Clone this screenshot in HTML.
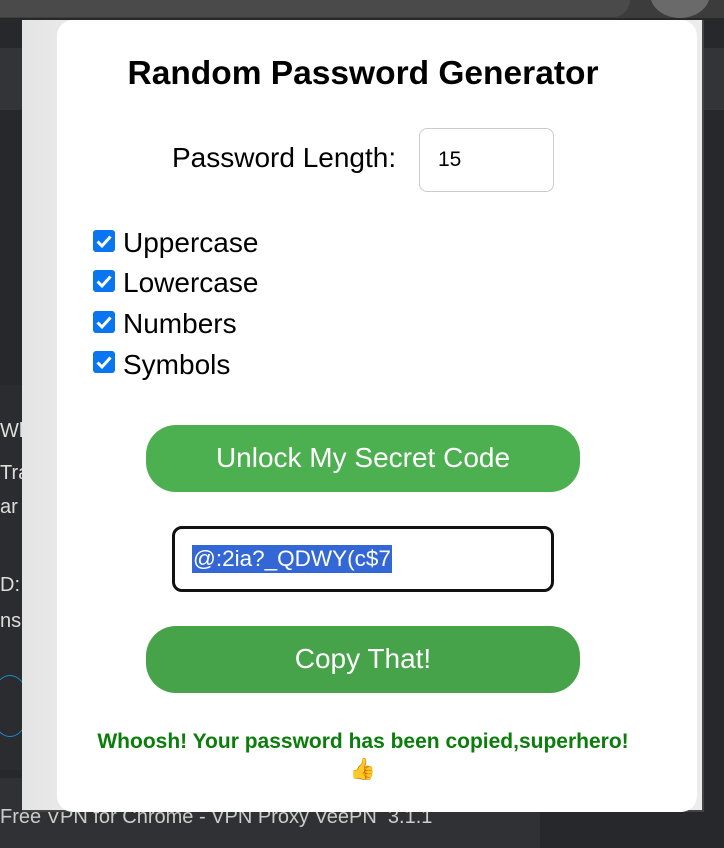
<!DOCTYPE html>
<html><head><style>
*{box-sizing:border-box;margin:0;padding:0}
body{width:724px;height:848px;background:#27282c;position:relative;overflow:hidden;font-family:"Liberation Sans",Arial,sans-serif}
.top{position:absolute;left:0;top:0;width:724px;height:18px;background:#3c3c3c}
.tab{position:absolute;left:0;top:0;width:630px;height:17px;background:#4a4a4a;border-radius:0 0 20px 0}
.circ{position:absolute;left:650px;top:-30px;width:60px;height:48px;border-radius:50%;background:#6a6a6a}
.band1{position:absolute;left:0;top:48px;width:724px;height:62px;background:#333438}
.side{position:absolute;left:0;top:385px;width:60px;height:385px;background:#2b2c30}
.bt{position:absolute;color:#ddd;font-size:20px}
.foot{position:absolute;left:0;top:778px;width:540px;height:70px;background:#303135}
.popup{position:absolute;left:22px;top:20px;width:682px;height:792px;background:linear-gradient(90deg,#e4e4e4,#eeeeee 12%,#ececec);border-right:2px solid #444;border-bottom:2px solid #444}
.card{position:absolute;left:57px;top:20px;width:640px;height:792px;background:#fff;border-radius:16px}
h1{position:absolute;left:0;top:55px;width:726px;text-align:center;font-size:33.5px;font-weight:bold;color:#000}
.lbl{position:absolute;left:172px;top:142px;font-size:28px;color:#000}
.num{position:absolute;left:419px;top:128px;width:135px;height:64px;border:1px solid #ccc;border-radius:8px;font-size:21px;padding:19px 0 0 18px}
.cb{position:absolute;left:93px;width:22px;height:22px;background:#0a75f0;border-radius:3px}
.cb svg{position:absolute;left:0;top:0}
.cl{position:absolute;left:123px;font-size:28px;color:#000}
.btn{position:absolute;left:146px;width:434px;height:67px;border-radius:30px;background:#4caf50;color:#fff;font-size:28px;text-align:center;line-height:66px}
.pw{position:absolute;left:172px;top:526px;width:382px;height:66px;border:3px solid #111;border-radius:10px}
.sel{position:absolute;left:17px;top:16px;background:#3367d6;color:#fff;font-size:22.5px;line-height:28px;padding:0 1px}
.msg{position:absolute;left:57px;top:728px;width:612px;text-align:center;font-size:21px;font-weight:bold;color:#0a7d0a;line-height:28px}
</style></head><body>
<div class="top"></div><div class="tab"></div><div class="circ"></div>
<div class="band1"></div><div class="side"></div>
<div class="bt" style="left:0;top:420px">Wh</div>
<div class="bt" style="left:0;top:462px">Tra</div>
<div class="bt" style="left:0;top:496px">ar</div>
<div class="bt" style="left:0;top:574px">D:</div>
<div class="bt" style="left:0;top:610px">ns</div>
<div style="position:absolute;left:-10px;top:675px;width:40px;height:62px;border:1px solid #1a8acb;border-radius:50%"></div>
<div class="foot"></div>
<div class="bt" style="left:0;top:806px;color:#ccc">Free VPN for Chrome - VPN Proxy VeePN&nbsp;&nbsp;3.1.1</div>
<div class="popup"></div>
<div class="card"></div>
<h1>Random Password Generator</h1>
<div class="lbl">Password Length:</div>
<div class="num">15</div>
<div class="cb" style="top:230px"><svg width="22" height="22"><path d="M4.5 11.5l4.5 4.5L17.5 6.5" stroke="#fff" stroke-width="3" fill="none"/></svg></div>
<div class="cl" style="top:227px">Uppercase</div>
<div class="cb" style="top:270px"><svg width="22" height="22"><path d="M4.5 11.5l4.5 4.5L17.5 6.5" stroke="#fff" stroke-width="3" fill="none"/></svg></div>
<div class="cl" style="top:267px">Lowercase</div>
<div class="cb" style="top:311px"><svg width="22" height="22"><path d="M4.5 11.5l4.5 4.5L17.5 6.5" stroke="#fff" stroke-width="3" fill="none"/></svg></div>
<div class="cl" style="top:308px">Numbers</div>
<div class="cb" style="top:351px"><svg width="22" height="22"><path d="M4.5 11.5l4.5 4.5L17.5 6.5" stroke="#fff" stroke-width="3" fill="none"/></svg></div>
<div class="cl" style="top:349px">Symbols</div>
<div class="btn" style="top:425px">Unlock My Secret Code</div>
<div class="pw"><span class="sel">@:2ia?_QDWY(c$7</span></div>
<div class="btn" style="top:626px;background:#46a34a">Copy That!</div>
<div class="msg">Whoosh! Your password has been copied,superhero!<br>👍</div>
</body></html>
